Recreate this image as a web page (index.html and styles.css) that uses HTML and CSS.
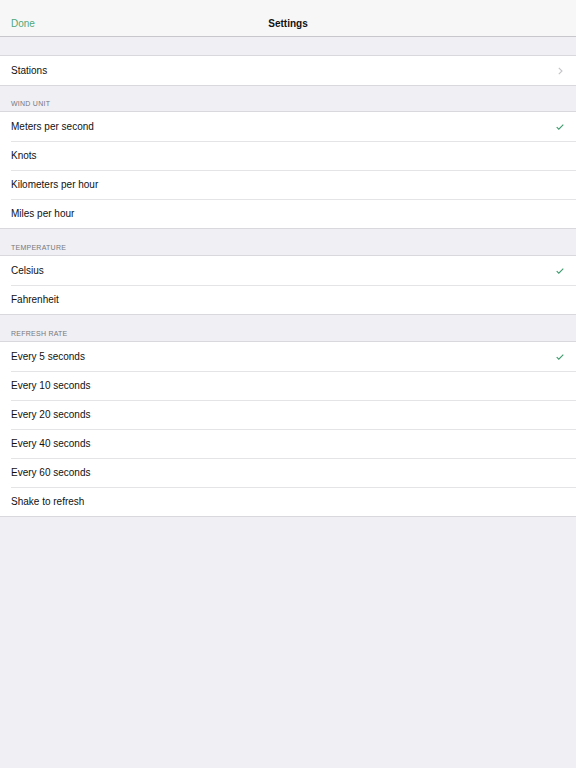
FILE: index.html
```html
<!DOCTYPE html>
<html>
<head>
<meta charset="utf-8">
<link rel="stylesheet" href="styles.css">
</head>
<body>
<header class="nav">
  <span class="done">Done</span>
  <span class="title">Settings</span>
</header>
<main class="content">
  <div class="gap-top"></div>
  <ul class="group">
    <li class="row"><span>Stations</span>
      <svg class="chev" width="5" height="8" viewBox="0 0 5 8"><path d="M0.8 0.8 L4 4 L0.8 7.2" fill="none" stroke="#c4c4c9" stroke-width="1.1"/></svg>
    </li>
  </ul>
  <div class="section-head first">WIND UNIT</div>
  <ul class="group">
    <li class="row"><span>Meters per second</span>
      <svg class="check" width="8" height="6" viewBox="0 0 8 6"><path d="M0.7 3.2 L2.8 5.2 L7.3 0.7" fill="none" stroke="#3c9a6c" stroke-width="1.1"/></svg>
    </li>
    <li class="row"><span>Knots</span></li>
    <li class="row"><span>Kilometers per hour</span></li>
    <li class="row"><span>Miles per hour</span></li>
  </ul>
  <div class="section-head">TEMPERATURE</div>
  <ul class="group">
    <li class="row"><span>Celsius</span>
      <svg class="check" width="8" height="6" viewBox="0 0 8 6"><path d="M0.7 3.2 L2.8 5.2 L7.3 0.7" fill="none" stroke="#3c9a6c" stroke-width="1.1"/></svg>
    </li>
    <li class="row"><span>Fahrenheit</span></li>
  </ul>
  <div class="section-head">REFRESH RATE</div>
  <ul class="group">
    <li class="row"><span>Every 5 seconds</span>
      <svg class="check" width="8" height="6" viewBox="0 0 8 6"><path d="M0.7 3.2 L2.8 5.2 L7.3 0.7" fill="none" stroke="#3c9a6c" stroke-width="1.1"/></svg>
    </li>
    <li class="row"><span>Every 10 seconds</span></li>
    <li class="row"><span>Every 20 seconds</span></li>
    <li class="row"><span>Every 40 seconds</span></li>
    <li class="row"><span>Every 60 seconds</span></li>
    <li class="row"><span>Shake to refresh</span></li>
  </ul>
</main>
</body>
</html>
```
FILE: styles.css
```css
html, body {
  margin: 0;
  padding: 0;
  background: #efeff4;
  font-family: "Liberation Sans", Arial, sans-serif;
  color: #111;
}
.nav {
  height: 37px;
  box-sizing: border-box;
  padding-top: 18px;
  background: #f7f7f7;
  border-bottom: 1px solid #c8c8cc;
  display: flex;
  align-items: flex-start;
  justify-content: center;
  position: relative;
}
.done {
  position: absolute;
  left: 11px;
  top: 18px;
  font-size: 10px;
  color: #4fa87a;
}
.title {
  font-size: 10px;
  font-weight: bold;
  color: #111;
}
.gap-top {
  height: 18px;
}
.group {
  list-style: none;
  margin: 0;
  padding: 0;
  background: #fff;
  border-top: 1px solid #d9d9dd;
  border-bottom: 1px solid #d9d9dd;
}
.row {
  height: 29px;
  display: flex;
  align-items: center;
  justify-content: space-between;
  padding: 0 11px 0 11px;
  font-size: 10px;
  position: relative;
}
.row + .row::before {
  content: "";
  position: absolute;
  left: 11px;
  right: 0;
  top: 0;
  height: 1px;
  background: #e4e4e7;
}
.row span {
  margin-top: -1px;
}
.chev {
  margin-right: 2px;
}
.check {
  margin-right: 1px;
}
.section-head {
  height: 26px;
  box-sizing: border-box;
  padding: 15px 11px 0;
  font-size: 7px;
  color: #77777c;
  letter-spacing: 0.25px;
}
.section-head.first {
  height: 25px;
  padding-top: 14px;
}
```
